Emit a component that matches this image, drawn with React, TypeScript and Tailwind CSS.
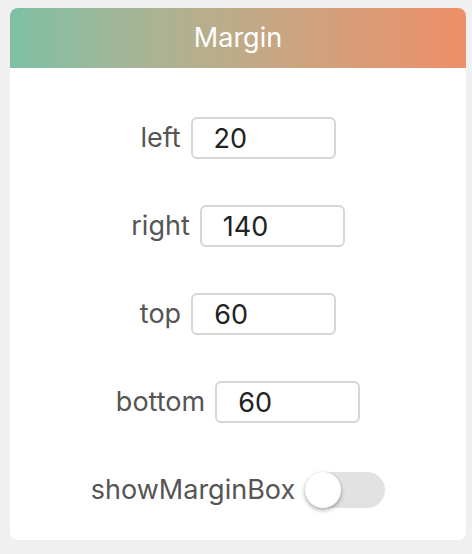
import { useState } from "react";

const fields = [
  { label: "left", value: "20" },
  { label: "right", value: "140" },
  { label: "top", value: "60" },
  { label: "bottom", value: "60" },
];

const App = () => {
  const [values, setValues] = useState(fields.map((f) => f.value));
  const [showBox, setShowBox] = useState(false);

  return (
    <div className="min-h-[554px] w-[472px] bg-[#f0f0f0] pt-2 px-[10px] font-['Inter',sans-serif]">
      <div className="w-[456px] h-[532px] bg-white rounded-lg overflow-hidden">
        <div className="h-[60px] flex items-center justify-center bg-gradient-to-r from-[#7dc0a5] to-[#ee8e68] text-white text-[27px]">
          Margin
        </div>
        <div className="flex flex-col items-center pt-[49px]">
          {fields.map((f, i) => (
            <div key={f.label} className="h-[88px] flex items-start gap-[10px]">
              <span className="h-[42px] flex items-center text-[27px] text-[#555]">
                {f.label}
              </span>
              <input
                type="text"
                value={values[i]}
                onChange={(e) => {
                  const next = [...values];
                  next[i] = e.target.value;
                  setValues(next);
                }}
                className="w-[145px] h-[42px] border-2 border-[#d6d6d6] rounded-md pl-[21px] text-[27px] text-[#222] outline-none"
              />
            </div>
          ))}
          <div className="flex items-center gap-[10px] mt-[1px]">
            <span className="text-[27px] text-[#555]">showMarginBox</span>
            <button
              onClick={() => setShowBox(!showBox)}
              className="relative w-[80px] h-[36px] rounded-full bg-[#e2e2e2]"
            >
              <span
                className={
                  showBox
                    ? "absolute top-0 left-[44px] w-[36px] h-[36px] rounded-full bg-white shadow-[0_2px_4px_rgba(0,0,0,0.35)]"
                    : "absolute top-0 left-0 w-[36px] h-[36px] rounded-full bg-white shadow-[0_2px_4px_rgba(0,0,0,0.35)]"
                }
              />
            </button>
          </div>
        </div>
      </div>
    </div>
  );
};

export default App;
